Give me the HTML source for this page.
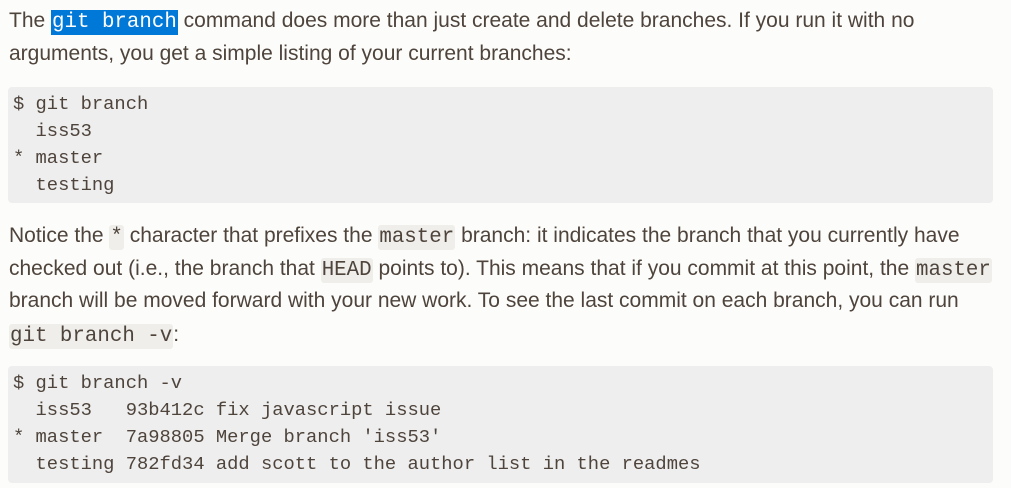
<!DOCTYPE html>
<html><head><style>
body{margin:0;background:#fcfcfa;width:1011px;height:488px;overflow:hidden;font-family:"Liberation Sans",Arial,sans-serif;color:#4e443c;font-size:21px}
.l{position:absolute;left:9px;white-space:pre;line-height:26px}
code{font-family:"Liberation Mono",monospace;font-size:20.8px;background:#efeeea;border-radius:3px;padding:1px 1px}
.sel{background:#0078d7;color:#fff;border-radius:0}
pre{position:absolute;left:8px;width:985px;margin:0;background:#eeeeee;border-radius:4px;font-family:"Liberation Mono",monospace;font-size:18.8px;line-height:27px;padding:4px 5px;box-sizing:border-box;color:#4e443c}
</style></head><body>
<div class="l" style="top:8px">The <code class="sel">git branch</code> command does more than just create and delete branches. If you run it with no</div>
<div class="l" style="top:41px">arguments, you get a simple listing of your current branches:</div>
<pre style="top:87px;height:116px">$ git branch
  iss53
* master
  testing</pre>
<div class="l" style="top:223px">Notice the <code>*</code> character that prefixes the <code>master</code> branch: it indicates the branch that you currently have</div>
<div class="l" style="top:256px">checked out (i.e., the branch that <code>HEAD</code> points to). This means that if you commit at this point, the <code>master</code></div>
<div class="l" style="top:288px">branch will be moved forward with your new work. To see the last commit on each branch, you can run</div>
<div class="l" style="top:322px"><code>git branch -v</code>:</div>
<pre style="top:366px;height:117px">$ git branch -v
  iss53   93b412c fix javascript issue
* master  7a98805 Merge branch 'iss53'
  testing 782fd34 add scott to the author list in the readmes</pre>
</body></html>
